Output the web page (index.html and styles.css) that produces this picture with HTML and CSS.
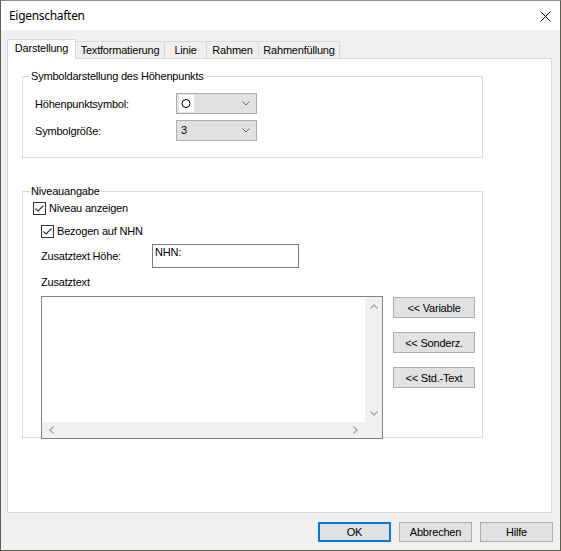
FILE: index.html
```html
<!DOCTYPE html>
<html lang="de">
<head>
<meta charset="utf-8">
<title>Eigenschaften</title>
<link rel="stylesheet" href="styles.css">
</head>
<body>
<div class="window">
  <div class="titlebar">
    <span class="title">Eigenschaften</span>
    <svg class="close" width="11" height="11" viewBox="0 0 11 11"><path d="M0.5 0.5 L10.5 10.5 M10.5 0.5 L0.5 10.5" stroke="#000" stroke-width="1" fill="none"/></svg>
  </div>
  <div class="main">
    <div class="tabs">
      <div class="tab active">Darstellung</div>
      <div class="tab t2">Textformatierung</div>
      <div class="tab t3">Linie</div>
      <div class="tab t4">Rahmen</div>
      <div class="tab t5">Rahmenfüllung</div>
    </div>
    <div class="panel">
      <div class="group g1">
        <span class="legend">Symboldarstellung des Höhenpunkts</span>
        <div class="row">
          <span class="lbl">Höhenpunktsymbol:</span>
          <div class="select">
            <span class="sym"><svg width="15" height="17" viewBox="0 0 15 17"><circle cx="7" cy="8.5" r="4" stroke="#000" stroke-width="1" fill="none"/></svg></span>
            <svg class="chev" width="8" height="5" viewBox="0 0 8 5"><polyline points="0.5,0.5 4,4 7.5,0.5" stroke="#606060" stroke-width="1" fill="none"/></svg>
          </div>
        </div>
        <div class="row">
          <span class="lbl">Symbolgröße:</span>
          <div class="select">
            <span class="val">3</span>
            <svg class="chev" width="8" height="5" viewBox="0 0 8 5"><polyline points="0.5,0.5 4,4 7.5,0.5" stroke="#606060" stroke-width="1" fill="none"/></svg>
          </div>
        </div>
      </div>
      <div class="group g2">
        <span class="legend">Niveauangabe</span>
        <div class="cbrow">
          <span class="cb"><svg width="11" height="11" viewBox="0 0 11 11"><polyline points="1.5,5.5 4,8 9.5,2.5" stroke="#333" stroke-width="1.1" fill="none"/></svg></span>
          <span class="cbl">Niveau anzeigen</span>
        </div>
        <div class="cbrow cb2">
          <span class="cb"><svg width="11" height="11" viewBox="0 0 11 11"><polyline points="1.5,5.5 4,8 9.5,2.5" stroke="#333" stroke-width="1.1" fill="none"/></svg></span>
          <span class="cbl">Bezogen auf NHN</span>
        </div>
        <div class="inrow">
          <span class="inlbl">Zusatztext Höhe:</span>
          <div class="input">NHN:</div>
        </div>
        <div class="ztlbl">Zusatztext</div>
        <div class="tarow">
          <div class="textarea">
            <div class="ta-content"></div>
            <div class="vscroll">
              <svg width="8" height="5" viewBox="0 0 8 5"><polyline points="0.5,4.5 4,1 7.5,4.5" stroke="#a6a6a6" stroke-width="1.4" fill="none"/></svg>
              <svg width="8" height="5" viewBox="0 0 8 5"><polyline points="0.5,0.5 4,4 7.5,0.5" stroke="#a6a6a6" stroke-width="1.4" fill="none"/></svg>
            </div>
            <div class="hscroll">
              <svg width="5" height="8" viewBox="0 0 5 8"><polyline points="4.5,0.5 1,4 4.5,7.5" stroke="#a6a6a6" stroke-width="1.4" fill="none"/></svg>
              <svg width="5" height="8" viewBox="0 0 5 8"><polyline points="0.5,0.5 4,4 0.5,7.5" stroke="#a6a6a6" stroke-width="1.4" fill="none"/></svg>
            </div>
            <div class="corner"></div>
          </div>
          <div class="sidebtns">
            <div class="btn side">&lt;&lt; Variable</div>
            <div class="btn side">&lt;&lt; Sonderz.</div>
            <div class="btn side">&lt;&lt; Std.-Text</div>
          </div>
        </div>
      </div>
    </div>
    <div class="footer">
      <div class="btn foot ok">OK</div>
      <div class="btn foot">Abbrechen</div>
      <div class="btn foot">Hilfe</div>
    </div>
  </div>
</div>
</body>
</html>
```
FILE: styles.css
```css
html, body {
  margin: 0;
  padding: 0;
  background: #f0f0f0;
}
body {
  font-family: "Liberation Sans", Arial, sans-serif;
  font-size: 11px;
  letter-spacing: -0.2px;
  color: #000;
}
.window {
  width: 561px;
  height: 551px;
  box-sizing: border-box;
  border: 1px solid #5b5f4b;
  border-top-color: #8c8c8c;
  background: #f0f0f0;
  display: flex;
  flex-direction: column;
}
.titlebar {
  flex: none;
  height: 29px;
  background: #fff;
  display: flex;
  align-items: center;
  justify-content: space-between;
  padding: 0 9px 0 8px;
}
.title {
  font-family: "Noto Sans", "Open Sans", sans-serif;
  font-size: 12px;
  letter-spacing: -0.3px;
  line-height: 16px;
  margin-top: 1px;
}
.close {
  display: block;
  margin-top: 1px;
}
.main {
  flex: 1;
  padding: 9px 8px 0 6px;
  display: flex;
  flex-direction: column;
}
.tabs {
  display: flex;
  align-items: flex-end;
  height: 19px;
}
.tab {
  box-sizing: border-box;
  height: 17px;
  border: 1px solid #d9d9d9;
  border-bottom: none;
  background: #f0f0f0;
  line-height: 16px;
  margin-left: -1px;
  white-space: nowrap;
  text-align: center;
}
.tab.active {
  width: 69px;
  height: 20px;
  margin-left: 0;
  margin-bottom: -1px;
  background: #fff;
  position: relative;
  z-index: 1;
  line-height: 16px;
}
.t2 {
  width: 90px;
}
.t3 {
  width: 43px;
}
.t4 {
  width: 53px;
}
.t5 {
  width: 82px;
}
.panel {
  width: 545px;
  height: 455px;
  box-sizing: border-box;
  border: 1px solid #d9d9d9;
  background: #fff;
  padding: 17px 0 0 14px;
}
.group {
  position: relative;
  width: 461px;
  box-sizing: border-box;
  border: 1px solid #dcdcdc;
}
.legend {
  position: absolute;
  left: 7px;
  top: -7px;
  background: #fff;
  padding: 0 1px;
  line-height: 13px;
  white-space: nowrap;
}
.g1 {
  height: 82px;
  padding: 16px 0 0 12px;
}
.row {
  display: flex;
  align-items: center;
  height: 21px;
}
.row + .row {
  margin-top: 6px;
}
.lbl {
  width: 141px;
}
.select {
  width: 81px;
  height: 21px;
  box-sizing: border-box;
  border: 1px solid #adadad;
  background: #e1e1e1;
  display: flex;
  align-items: center;
  padding-left: 2px;
}
.sym {
  width: 15px;
  height: 17px;
  background: #fff;
  display: block;
}
.sym svg {
  display: block;
}
.val {
  padding-left: 2px;
  line-height: 13px;
}
.chev {
  margin-left: auto;
  margin-right: 6px;
  display: block;
}
.g2 {
  height: 247px;
  margin-top: 33px;
  padding: 10px 0 0 10px;
}
.cbrow {
  display: flex;
  align-items: center;
  height: 13px;
}
.cb2 {
  margin-top: 10px;
  margin-left: 8px;
}
.cb {
  width: 13px;
  height: 13px;
  box-sizing: border-box;
  border: 1px solid #333;
  background: #fff;
  display: block;
}
.cb svg {
  display: block;
}
.cbl {
  margin-left: 3px;
  line-height: 13px;
}
.inrow {
  display: flex;
  align-items: center;
  margin-top: 6px;
  margin-left: 8px;
  height: 24px;
}
.inlbl {
  width: 111px;
}
.input {
  width: 147px;
  height: 24px;
  box-sizing: border-box;
  border: 1px solid #7a7a7a;
  background: #fff;
  padding: 1px 0 0 2px;
  line-height: 13px;
}
.ztlbl {
  margin-top: 8px;
  margin-left: 8px;
  line-height: 13px;
  height: 13px;
}
.tarow {
  display: flex;
  margin-top: 7px;
  margin-left: 8px;
}
.textarea {
  width: 342px;
  height: 143px;
  box-sizing: border-box;
  border: 1px solid #828282;
  background: #fff;
  display: grid;
  grid-template-columns: 1fr 17px;
  grid-template-rows: 1fr 16px;
}
.vscroll {
  background: #f0f0f0;
  display: flex;
  flex-direction: column;
  align-items: center;
  justify-content: space-between;
  padding: 7px 0 6px;
}
.vscroll svg, .hscroll svg {
  display: block;
}
.hscroll {
  background: #f0f0f0;
  display: flex;
  align-items: center;
  justify-content: space-between;
  padding: 0 7px 0 7px;
}
.corner {
  background: #f0f0f0;
}
.sidebtns {
  display: flex;
  flex-direction: column;
  gap: 14px;
  margin-left: 10px;
  margin-top: 1px;
}
.btn {
  box-sizing: border-box;
  background: #e1e1e1;
  border: 1px solid #adadad;
  display: flex;
  align-items: center;
  justify-content: center;
  white-space: nowrap;
}
.side {
  width: 82px;
  height: 21px;
}
.footer {
  display: flex;
  justify-content: flex-end;
  gap: 8px;
  margin-top: 9px;
  margin-right: -1px;
}
.foot {
  width: 73px;
  height: 20px;
}
.ok {
  border: 2px solid #0078d7;
}
```
